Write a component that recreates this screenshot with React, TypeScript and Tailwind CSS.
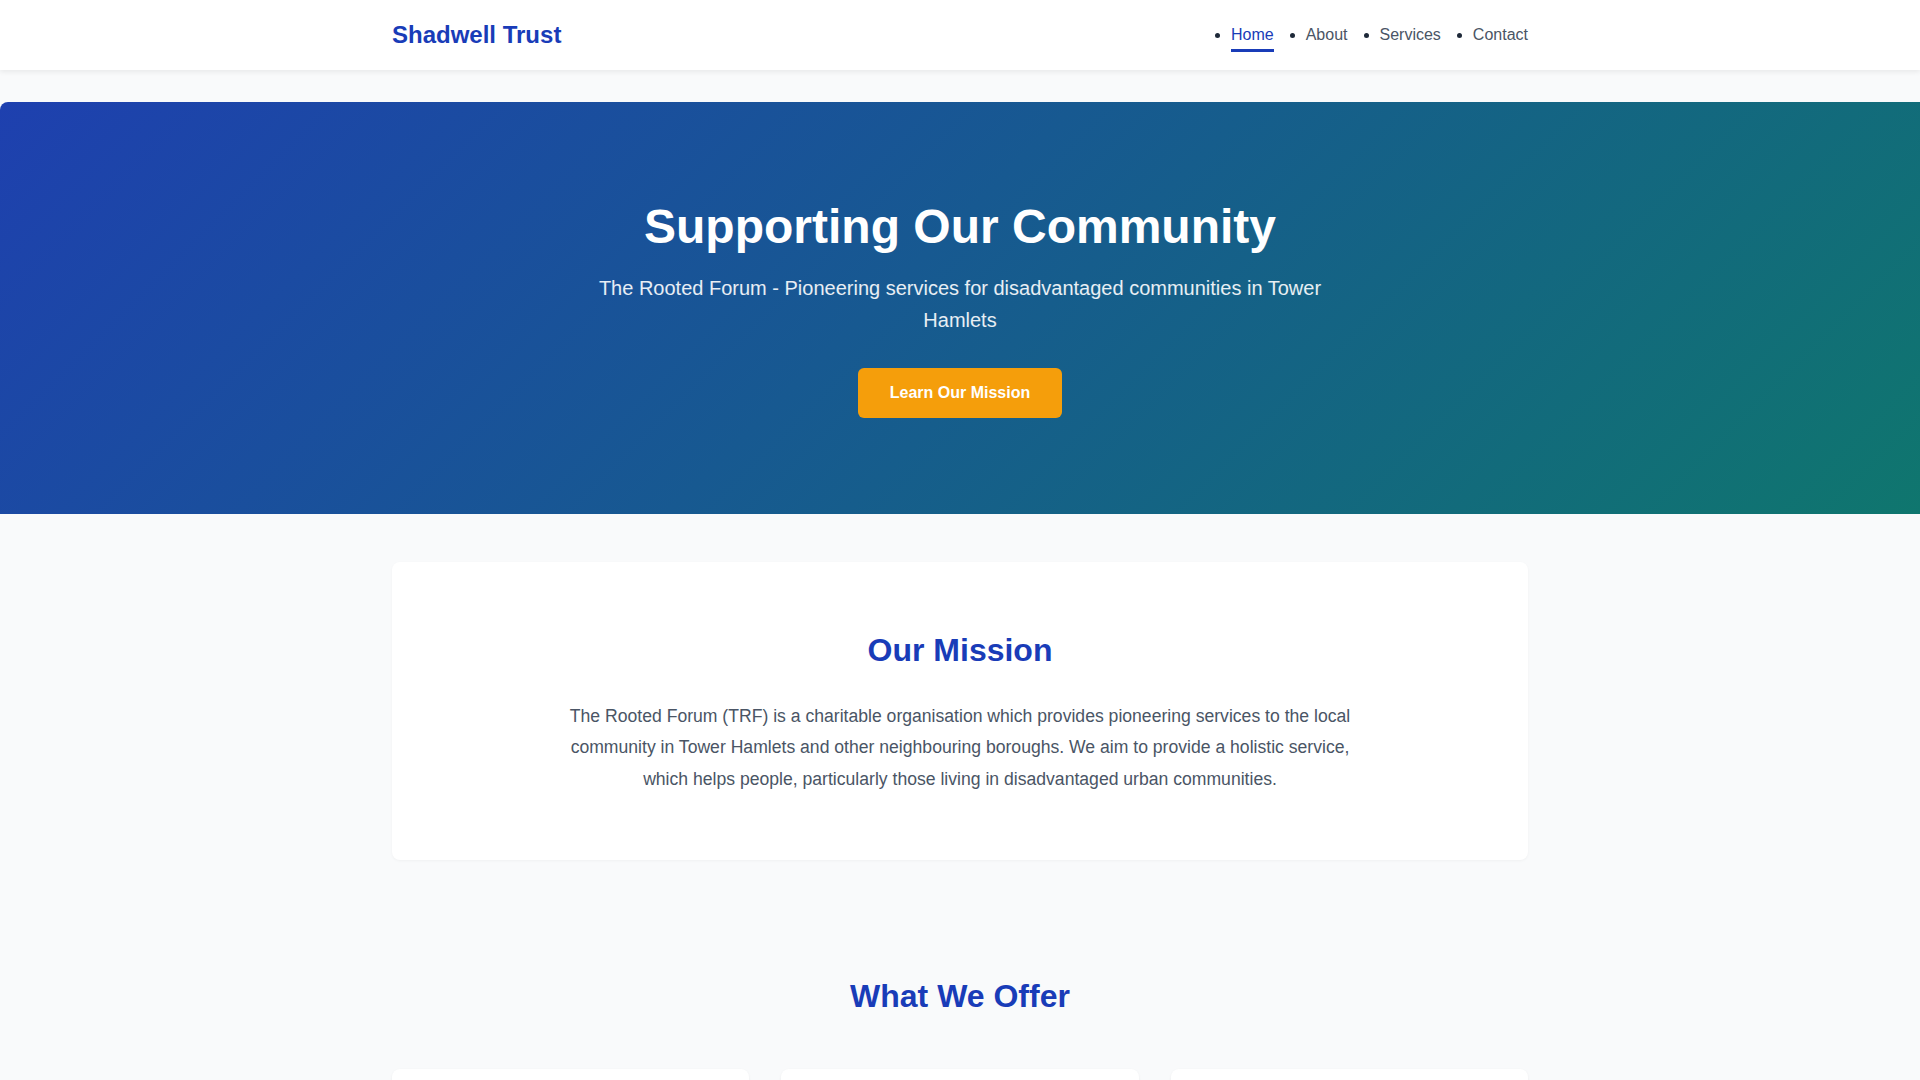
const navItems = ['Home', 'About', 'Services', 'Contact']

const offers = [
  {
    title: 'Advice & Guidance',
    text: 'Free, confidential support on welfare, housing and everyday issues for local residents.',
  },
  {
    title: 'Community Programmes',
    text: 'Workshops, activities and events that bring neighbours together across Tower Hamlets.',
  },
  {
    title: 'Wellbeing Support',
    text: 'Holistic services that help people build confidence, skills and healthier lives.',
  },
]

function Header() {
  return (
    <header className="bg-white shadow-[0_2px_5px_rgba(0,0,0,0.07)]">
      <div className="max-w-[1200px] mx-auto px-8 h-[70px] flex items-center justify-between">
        <a href="#" className="text-2xl font-bold text-blue-800">
          Shadwell Trust
        </a>
        <nav>
          <ul className="flex gap-8 list-disc text-gray-800">
            {navItems.map((item) => (
              <li key={item} className="text-base">
                {item === 'Home' ? (
                  <a href="#" className="relative text-blue-800">
                    {item}
                    <span className="absolute left-0 right-0 -bottom-[9px] h-[3px] bg-blue-800" />
                  </a>
                ) : (
                  <a href="#" className="text-gray-600">
                    {item}
                  </a>
                )}
              </li>
            ))}
          </ul>
        </nav>
      </div>
    </header>
  )
}

function Hero() {
  return (
    <section className="mt-8 py-24 px-8 text-center text-white rounded-tl-lg bg-[linear-gradient(135deg,#1e40af_0%,#0f766e_100%)]">
      <h1 className="text-5xl leading-[1.2] font-bold mb-4">Supporting Our Community</h1>
      <p className="text-xl leading-[1.6] text-white/90 max-w-3xl mx-auto mb-8">
        The Rooted Forum - Pioneering services for disadvantaged communities in Tower Hamlets
      </p>
      <a
        href="#"
        className="inline-block bg-[#f59e0b] text-white font-bold text-base leading-6 px-8 py-[13px] rounded-md"
      >
        Learn Our Mission
      </a>
    </section>
  )
}

export default function App() {
  return (
    <div className="min-h-screen bg-gray-50 text-gray-800 font-['Liberation_Sans',Arial,sans-serif]">
      <Header />
      <Hero />

      {/* Mission */}
      <section className="py-12">
        <div className="max-w-[1200px] mx-auto px-8">
          <div className="bg-white rounded-lg shadow-[0_1px_3px_rgba(0,0,0,0.04)] px-8 py-16 text-center">
            <h2 className="text-[2rem] leading-normal font-bold text-blue-800 mb-[27px]">Our Mission</h2>
            <p className="text-[1.1rem] leading-[1.8] text-gray-600 max-w-[800px] mx-auto">
              The Rooted Forum (TRF) is a charitable organisation which provides pioneering services to the
              local community in Tower Hamlets and other neighbouring boroughs. We aim to provide a holistic
              service, which helps people, particularly those living in disadvantaged urban communities.
            </p>
          </div>
        </div>
      </section>

      {/* Services */}
      <section className="pt-16 pb-16">
        <div className="max-w-[1200px] mx-auto px-8">
          <h2 className="text-[2rem] leading-normal font-bold text-blue-800 text-center mb-[49px]">
            What We Offer
          </h2>
          <div className="grid grid-cols-3 gap-8">
            {offers.map((o) => (
              <div key={o.title} className="bg-white rounded-lg shadow-[0_1px_3px_rgba(0,0,0,0.06)] p-8">
                <h3 className="text-xl font-bold text-blue-800 mb-3">{o.title}</h3>
                <p className="text-base leading-[1.7] text-gray-600">{o.text}</p>
              </div>
            ))}
          </div>
        </div>
      </section>
    </div>
  )
}
